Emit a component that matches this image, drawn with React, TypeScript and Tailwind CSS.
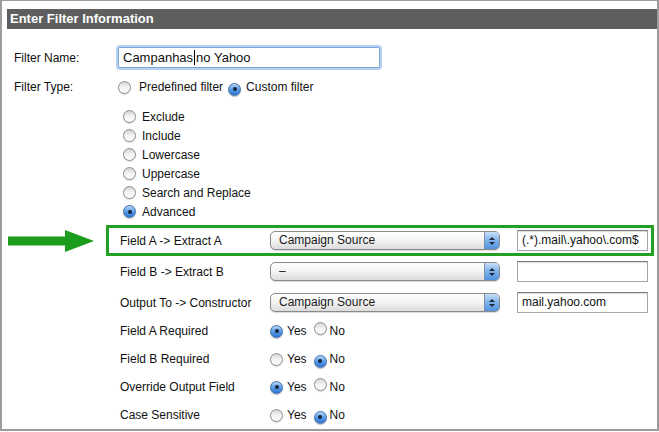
import React from 'react';

function Radio({ on }: { on?: boolean }) {
  return on ? (
    <span className="relative inline-flex h-[13px] w-[13px] shrink-0 items-center justify-center rounded-full border border-[#3f6ea6] bg-gradient-to-b from-[#b6d6f8] via-[#5c9ce6] to-[#2f74d6] shadow-[0_1px_1px_rgba(0,0,0,0.25)]">
      <span className="h-[4px] w-[4px] rounded-full bg-[#14263a]" />
    </span>
  ) : (
    <span className="inline-block h-[13px] w-[13px] shrink-0 rounded-full border border-[#8d8d8d] bg-gradient-to-b from-[#d4d4d4] via-[#f4f4f4] to-white shadow-[0_1px_1px_rgba(0,0,0,0.15)]" />
  );
}

function PopUp({ value }: { value: string }) {
  return (
    <div className="flex h-[19px] w-[230px] items-stretch overflow-hidden rounded-[5px] border border-[#8a8a8a] bg-gradient-to-b from-white via-[#f3f3f3] to-[#dcdcdc] shadow-[0_1px_1px_rgba(0,0,0,0.15)]">
      <span className="flex-1 pl-[8px] text-[12px] leading-[17px] text-[#1a1a1a]">{value}</span>
      <span className="flex w-[15px] flex-col items-center justify-center gap-[2px] border-l border-[#7d8fa6] bg-gradient-to-b from-[#c7def7] via-[#7fb2eb] to-[#4f92e0]">
        <svg width="6" height="3" viewBox="0 0 6 3"><polygon points="0,3 3,0 6,3" fill="#1c2a3a" /></svg>
        <svg width="6" height="3" viewBox="0 0 6 3"><polygon points="0,0 6,0 3,3" fill="#1c2a3a" /></svg>
      </span>
    </div>
  );
}

function TextBox({ value }: { value?: string }) {
  return (
    <div className="h-[21px] w-[131px] border border-[#a6a6a6] border-t-[#7e7e7e] bg-white pl-[4px] text-[12px] leading-[19px] text-[#111] shadow-[inset_0_1px_1px_rgba(0,0,0,0.15)]">
      {value}
    </div>
  );
}

function YesNo({ yes }: { yes: boolean }) {
  return (
    <div className="flex items-center text-[12px]">
      <Radio on={yes} />
      <span className="ml-[4px]">Yes</span>
      <span className="ml-[7px]"><Radio on={!yes} /></span>
      <span className="ml-[3px]">No</span>
    </div>
  );
}

export default function App() {
  const types = ['Exclude', 'Include', 'Lowercase', 'Uppercase', 'Search and Replace', 'Advanced'];
  const flags: [string, boolean][] = [
    ['Field A Required', true],
    ['Field B Required', false],
    ['Override Output Field', true],
    ['Case Sensitive', false],
  ];

  return (
    <div className="h-[432px] w-[659px] overflow-hidden bg-white font-['Liberation_Sans',Arial,sans-serif] text-[12px] text-[#111]">
      <div className="h-[431px] border-x-2 border-b-2 border-t border-[#9c9c9c]">
        <div className="ml-[5px] mt-[8px] h-[20px] bg-[#5e5e5e] pl-[3px] text-[13px] font-bold leading-[20px] text-white">
          Enter Filter Information
        </div>

        <div className="ml-[12px] mt-[18px] flex h-[21px] items-center">
          <span className="w-[104px]">Filter Name:</span>
          <div className="flex h-[21px] w-[262px] items-center rounded-[2px] border border-[#7ca6da] bg-white pl-[4px] text-[13px] shadow-[0_0_0_2px_#b5d0f0]">
            <span>Campanhas</span>
            <span className="mx-[1px] h-[15px] w-px bg-black" />
            <span>no Yahoo</span>
          </div>
        </div>

        <div className="ml-[12px] mt-[9px] flex h-[20px] items-center">
          <span className="w-[104px]">Filter Type:</span>
          <Radio />
          <span className="ml-[8px]">Predefined filter</span>
          <span className="ml-[5px]"><Radio on /></span>
          <span className="ml-[5px]">Custom filter</span>
        </div>

        <div className="ml-[121px] mt-[10px] flex flex-col">
          {types.map((t) => (
            <div key={t} className="flex h-[19px] items-center">
              <Radio on={t === 'Advanced'} />
              <span className="ml-[6px]">{t}</span>
            </div>
          ))}
        </div>

        <div className="mt-[4px] flex items-center pl-[6px]">
          <svg width="86" height="22" viewBox="0 0 86 22">
            <rect x="0" y="6.5" width="59" height="9" fill="#1c9c1c" />
            <polygon points="57,0 86,11 57,22" fill="#1c9c1c" />
          </svg>
          <div className="ml-[12px] flex h-[31px] w-[548px] items-center border-[3px] border-[#23a023] pl-[11px]">
            <span className="w-[150px]">Field A -&gt; Extract A</span>
            <PopUp value="Campaign Source" />
            <span className="ml-[17px]"><TextBox value="(.*).mail\.yahoo\.com$" /></span>
          </div>
        </div>

        <div className="ml-[118px] mt-[5px] flex h-[21px] items-center">
          <span className="w-[150px]">Field B -&gt; Extract B</span>
          <PopUp value="–" />
          <span className="ml-[17px]"><TextBox /></span>
        </div>

        <div className="ml-[118px] mt-[10px] flex h-[21px] items-center">
          <span className="w-[150px]">Output To -&gt; Constructor</span>
          <PopUp value="Campaign Source" />
          <span className="ml-[17px]"><TextBox value="mail.yahoo.com" /></span>
        </div>

        <div className="ml-[118px] mt-[8px] flex flex-col gap-[8px]">
          {flags.map(([label, yes]) => (
            <div key={label} className="flex h-[20px] items-center">
              <span className="w-[150px]">{label}</span>
              <YesNo yes={yes} />
            </div>
          ))}
        </div>
      </div>
    </div>
  );
}
